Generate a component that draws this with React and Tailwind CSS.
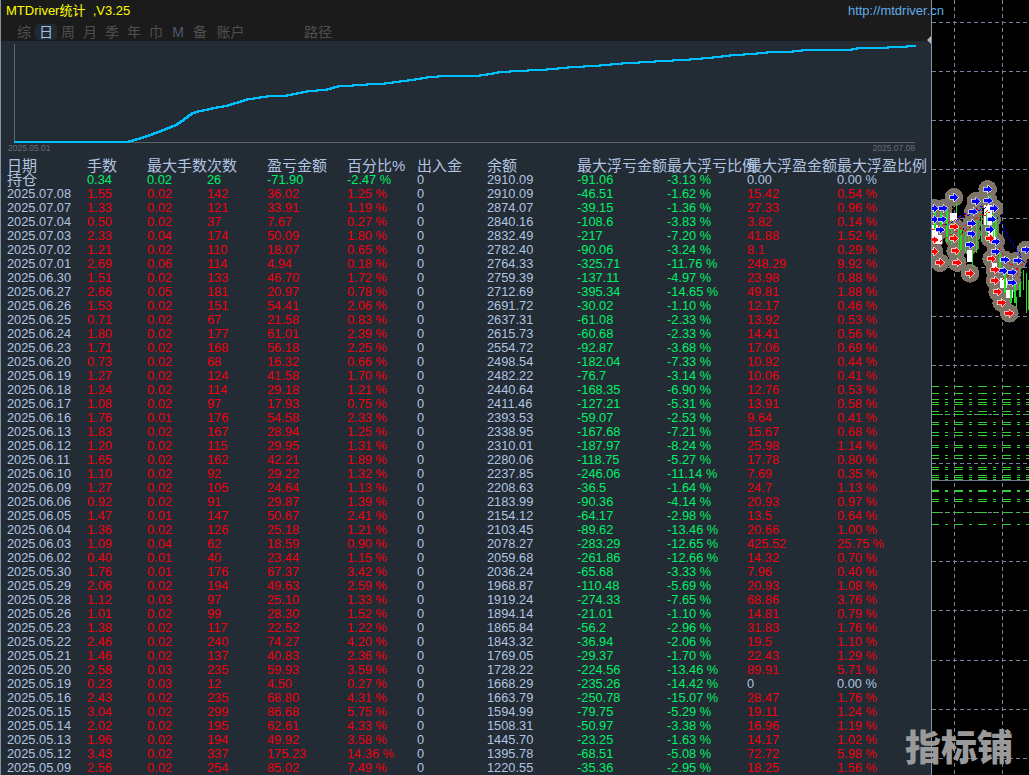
const cols = 'grid grid-cols-[80px_60px_60px_60px_80px_70px_70px_90px_90px_80px_90px_90px]'

const heads = ['日期', '手数', '最大手数', '次数', '盈亏金额', '百分比%', '出入金', '余额', '最大浮亏金额', '最大浮亏比例', '最大浮盈金额', '最大浮盈比例']

const rows = `07.08 1.55 0.02 142 36.02 1.25 2910.09 -46.51 -1.62 15.42 0.54
07.07 1.33 0.02 121 33.91 1.19 2874.07 -39.15 -1.36 27.33 0.96
07.04 0.50 0.02 37 7.67 0.27 2840.16 -108.6 -3.83 3.82 0.14
07.03 2.33 0.04 174 50.09 1.80 2832.49 -217 -7.20 41.88 1.52
07.02 1.21 0.02 110 18.07 0.65 2782.40 -90.06 -3.24 8.1 0.29
07.01 2.69 0.06 114 4.94 0.18 2764.33 -325.71 -11.76 248.29 9.92
06.30 1.51 0.02 133 46.70 1.72 2759.39 -137.11 -4.97 23.98 0.88
06.27 2.66 0.05 181 20.97 0.78 2712.69 -395.34 -14.65 49.81 1.88
06.26 1.53 0.02 151 54.41 2.06 2691.72 -30.02 -1.10 12.17 0.46
06.25 0.71 0.02 67 21.58 0.83 2637.31 -61.08 -2.33 13.92 0.53
06.24 1.80 0.02 177 61.01 2.39 2615.73 -60.68 -2.33 14.41 0.56
06.23 1.71 0.02 168 56.18 2.25 2554.72 -92.87 -3.68 17.06 0.69
06.20 0.73 0.02 68 16.32 0.66 2498.54 -182.04 -7.33 10.92 0.44
06.19 1.27 0.02 124 41.58 1.70 2482.22 -76.7 -3.14 10.06 0.41
06.18 1.24 0.02 114 29.18 1.21 2440.64 -168.35 -6.90 12.76 0.53
06.17 1.08 0.02 97 17.93 0.75 2411.46 -127.21 -5.31 13.91 0.58
06.16 1.76 0.01 176 54.58 2.33 2393.53 -59.07 -2.53 9.64 0.41
06.13 1.83 0.02 167 28.94 1.25 2338.95 -167.68 -7.21 15.67 0.68
06.12 1.20 0.02 115 29.95 1.31 2310.01 -187.97 -8.24 25.98 1.14
06.11 1.65 0.02 162 42.21 1.89 2280.06 -118.75 -5.27 17.78 0.80
06.10 1.10 0.02 92 29.22 1.32 2237.85 -246.06 -11.14 7.69 0.35
06.09 1.27 0.02 105 24.64 1.13 2208.63 -36.5 -1.64 24.7 1.13
06.06 0.92 0.02 91 29.87 1.39 2183.99 -90.36 -4.14 20.93 0.97
06.05 1.47 0.01 147 50.67 2.41 2154.12 -64.17 -2.98 13.5 0.64
06.04 1.36 0.02 126 25.18 1.21 2103.45 -89.62 -13.46 20.66 1.00
06.03 1.09 0.04 62 18.59 0.90 2078.27 -283.29 -12.65 425.52 25.75
06.02 0.40 0.01 40 23.44 1.15 2059.68 -261.86 -12.66 14.32 0.70
05.30 1.76 0.01 176 67.37 3.42 2036.24 -65.68 -3.33 7.96 0.40
05.29 2.06 0.02 194 49.63 2.59 1968.87 -110.48 -5.69 20.93 1.08
05.28 1.12 0.03 97 25.10 1.33 1919.24 -274.33 -7.65 68.86 3.76
05.26 1.01 0.02 99 28.30 1.52 1894.14 -21.01 -1.10 14.81 0.79
05.23 1.38 0.02 117 22.52 1.22 1865.84 -56.2 -2.96 31.83 1.76
05.22 2.46 0.02 240 74.27 4.20 1843.32 -36.94 -2.06 19.5 1.10
05.21 1.46 0.02 137 40.83 2.36 1769.05 -29.37 -1.70 22.43 1.29
05.20 2.58 0.03 235 59.93 3.59 1728.22 -224.56 -13.46 89.91 5.71
05.19 0.23 0.03 12 4.50 0.27 1668.29 -235.26 -14.42 0 0.00
05.16 2.43 0.02 235 68.80 4.31 1663.79 -250.78 -15.07 28.47 1.76
05.15 3.04 0.02 299 86.68 5.75 1594.99 -79.75 -5.29 19.11 1.24
05.14 2.02 0.02 195 62.61 4.33 1508.31 -50.97 -3.38 16.96 1.19
05.13 1.96 0.02 194 49.92 3.58 1445.70 -23.25 -1.63 14.17 1.02
05.12 3.43 0.02 337 175.23 14.36 1395.78 -68.51 -5.08 72.72 5.98
05.09 2.56 0.02 254 85.02 7.49 1220.55 -35.36 -2.95 18.25 1.56`
  .split('\n')
  .map((line) => line.split(' '))

const curve = [
  [14, 142], [125, 142], [133, 140], [143, 137], [160, 131], [177, 124], [184, 119], [192, 113], [198, 111], [217, 107],
  [228, 105], [247, 99], [267, 96], [287, 95], [307, 91], [327, 89], [338, 86], [367, 84], [385, 83], [415, 79],
  [427, 77], [438, 76], [473, 76], [487, 74], [498, 72], [510, 71], [528, 70], [547, 69], [568, 67], [600, 65],
  [622, 63], [655, 61], [690, 59], [713, 57], [730, 55], [757, 53], [767, 52], [793, 51], [802, 50], [847, 50],
  [857, 48], [888, 47], [907, 46], [916, 46],
]

const hGrid = [22, 71, 120, 169, 218, 267, 316, 365, 414, 463, 512, 561, 610, 660, 709, 758]
const greenRows = [386, 393, 399, 402, 404, 411, 414, 422, 424, 432, 435, 445, 447, 455, 458, 467, 469, 475, 477, 479, 490, 491, 499, 501, 512, 524]

// marker cluster, in coordinates of a 3x crop that starts at 925,170
const blue = [[87, 82], [188, 58], [153, 94], [27, 115], [55, 115], [190, 92], [207, 115], [27, 148], [52, 148], [200, 148], [145, 125], [140, 160], [45, 180], [140, 192], [195, 178], [212, 215], [135, 225], [212, 245], [240, 270], [278, 272], [303, 240], [262, 307], [235, 303], [262, 338]]
const red = [[27, 210], [87, 205], [88, 170], [27, 245], [92, 243], [45, 278], [97, 278], [135, 310], [200, 267], [210, 300], [210, 332], [218, 366], [230, 398], [253, 430], [195, 205]]
const white = [[18, 165, 22, 50], [28, 195, 22, 28], [125, 240, 20, 35], [178, 105, 22, 60], [190, 180, 22, 30], [75, 128, 22, 25], [225, 325, 22, 30], [243, 360, 22, 24], [200, 280, 16, 22]]
const greenBars = [[30, 120, 180], [48, 125, 190], [66, 120, 215], [80, 150, 225], [95, 100, 130], [100, 175, 260], [108, 180, 240], [122, 185, 250], [130, 180, 230], [143, 170, 290], [155, 150, 250], [170, 130, 215], [185, 130, 215], [197, 75, 100], [205, 130, 210], [213, 140, 200], [225, 250, 300], [240, 300, 370], [258, 360, 400], [270, 340, 400], [275, 380, 415], [285, 340, 380], [295, 300, 360], [305, 310, 430], [311, 330, 420]]
const dashes = [
  ['#ff0000', 20, 180, 185, 105], ['#ff0000', 30, 225, 200, 115], ['#0000ff', 60, 165, 190, 110], ['#ff0000', 90, 205, 195, 125],
  ['#0000ff', 100, 140, 180, 105], ['#ff0000', 190, 190, 290, 330], ['#0000ff', 215, 140, 290, 260], ['#ff0000', 200, 240, 280, 300],
  ['#0000ff', 235, 180, 305, 290], ['#ff0000', 230, 330, 312, 270],
]

function Arrow({ x, y, color }) {
  return (
    <polygon
      points={`${x - 13},${y - 6} ${x},${y - 6} ${x},${y - 13} ${x + 14},${y} ${x},${y + 13} ${x},${y + 6} ${x - 13},${y + 6}`}
      fill={color}
      stroke="#ffffff"
      strokeWidth="2"
    />
  )
}

function Cell({ tone, children }) {
  const color = tone === 'up' ? 'text-[#f00010]' : tone === 'down' ? 'text-[#00f068]' : 'text-[#b0c4e0]'
  return <div className={`whitespace-nowrap ${color}`}>{children}</div>
}

function Row({ r }) {
  const [date, lots, max, count, profit, pct, balance, loss, lossPct, gain, gainPct] = r
  const zero = gain === '0'
  return (
    <div className={`${cols} h-[14px] leading-[14px]`}>
      <Cell>2025.{date}</Cell>
      <Cell tone="up">{lots}</Cell>
      <Cell tone="up">{max}</Cell>
      <Cell tone="up">{count}</Cell>
      <Cell tone="up">{profit}</Cell>
      <Cell tone="up">{pct} %</Cell>
      <Cell>0</Cell>
      <Cell>{balance}</Cell>
      <Cell tone="down">{loss}</Cell>
      <Cell tone="down">{lossPct} %</Cell>
      <Cell tone={zero ? undefined : 'up'}>{gain}</Cell>
      <Cell tone={zero ? undefined : 'up'}>{gainPct} %</Cell>
    </div>
  )
}

function Chart() {
  // the balance moves in 1px steps, so split each stretch into small stairs
  let d = `M${curve[0][0]} ${curve[0][1]}`
  curve.slice(1).forEach(([x, y], i) => {
    const [px, py] = curve[i]
    const steps = Math.max(1, Math.abs(y - py))
    for (let s = 1; s <= steps; s++) {
      d += `H${Math.round(px + ((x - px) * s) / steps)}V${py + ((y - py) * s) / steps}`
    }
  })
  return (
    <svg viewBox="1 41 930 102" className="block h-[102px] w-[930px]" shapeRendering="crispEdges">
      <path d="M14 44V142H915" fill="none" stroke="#5f6468" strokeWidth="1" />
      <path d={d} fill="none" stroke="#00bfff" strokeWidth="2" />
    </svg>
  )
}

function MarketCanvas() {
  return (
    <svg viewBox="932 0 97 775" className="block h-[775px] w-[97px]">
      <g stroke="#77839a" strokeWidth="1" strokeDasharray="4 3" shapeRendering="crispEdges">
        {hGrid.map((y) => (
          <line key={y} x1="932" x2="1029" y1={y + 0.5} y2={y + 0.5} />
        ))}
        <line x1="954.5" x2="954.5" y1="0" y2="775" />
        <line x1="1002.5" x2="1002.5" y1="0" y2="775" />
      </g>
      <g stroke="#33cc33" strokeWidth="1" strokeDasharray="9 6 3 6" shapeRendering="crispEdges">
        {greenRows.map((y) => (
          <line key={y} x1="930" x2="1029" y1={y + 0.5} y2={y + 0.5} />
        ))}
      </g>
      <line x1="932" x2="1029" y1="480.5" y2="480.5" stroke="#6f7a88" shapeRendering="crispEdges" />
      <g transform="translate(925 170) scale(0.3333)" shapeRendering="crispEdges">
        {[...blue, ...red].map(([x, y]) => (
          <circle key={`${x}-${y}`} cx={x} cy={y} r="28" fill="#7f7468" />
        ))}
        {white.map(([x, y, w, h]) => (
          <rect key={`${x}-${y}`} x={x} y={y} width={w} height={h} fill="#ffffff" />
        ))}
        {greenBars.map(([x, y1, y2]) => (
          <line key={`${x}-${y1}`} x1={x} x2={x} y1={y1} y2={y2} stroke="#22dd22" strokeWidth="4" />
        ))}
        {dashes.map(([color, x1, y1, x2, y2]) => (
          <line key={`${x1}-${y1}`} x1={x1} y1={y1} x2={x2} y2={y2} stroke={color} strokeWidth="3" strokeDasharray="8 10" />
        ))}
        {blue.map(([x, y]) => (
          <Arrow key={`${x}-${y}`} x={x} y={y} color="#0000ff" />
        ))}
        {red.map(([x, y]) => (
          <Arrow key={`${x}-${y}`} x={x} y={y} color="#ff0000" />
        ))}
      </g>
    </svg>
  )
}

export default function App() {
  const tabs = ['综', '日', '周', '月', '季', '年', '巾', 'M', '备']
  return (
    <div className="relative flex h-[775px] w-[1029px] overflow-hidden bg-black font-['Liberation_Sans','Noto_Sans_CJK_SC',sans-serif] text-[13px]">
      <div className="relative z-10 h-[775px] w-[932px] shrink-0 border-x border-x-[#8392a6] bg-[#232b34]">
        <div className="h-[41px] bg-[#1b1b1b]">
          <div className="flex h-[21px] items-center justify-between pl-[5px]">
            <span className="whitespace-pre text-[#ffff00]">MTDriver统计  ,V3.25</span>
            <span className="-mr-[13px] text-[#5eaee6]">http://mtdriver.cn</span>
          </div>
          <div className="flex h-[20px] items-center pl-[12px] pt-[2px] text-[14px] text-[#4f4f4f]">
            {tabs.map((t) => (
              <span
                key={t}
                className={`flex h-[16px] w-[22px] items-center justify-center rounded-sm ${
                  t === '日' ? 'bg-[#202a35] text-[#a6c0e4]' : t === 'M' ? 'text-[#4d5a70]' : ''
                }`}
              >
                {t}
              </span>
            ))}
            <span className="w-[39px] text-center">账户</span>
            <span className="ml-[46px] w-[44px] text-center">路径</span>
          </div>
        </div>
        <div className="relative">
          <Chart />
          <span className="absolute -top-[5px] right-0 h-0 w-0 border-y-[4px] border-r-[4px] border-y-transparent border-r-[#b5b5b5]" />
        </div>
        <div className="flex h-[15px] items-start justify-between pl-[7px] pr-[16px] text-[8.5px] leading-[10px] text-[#6a6f75]">
          <span>2025.05.01</span>
          <span>2025.07.08</span>
        </div>
        <div className="pl-[6px] text-[12.8px]">
          <div className={`${cols} h-[15px] text-[15px] leading-[15px] text-[#b0c4e0]`}>
            {heads.map((h) => (
              <div key={h} className="whitespace-nowrap">
                {h}
              </div>
            ))}
          </div>
          <div className={`${cols} h-[14px] leading-[14px]`}>
            <div className="text-[15px] text-[#b0c4e0]">持仓</div>
            <Cell tone="down">0.34</Cell>
            <Cell tone="down">0.02</Cell>
            <Cell tone="down">26</Cell>
            <Cell tone="down">-71.90</Cell>
            <Cell tone="down">-2.47 %</Cell>
            <Cell>0</Cell>
            <Cell>2910.09</Cell>
            <Cell tone="down">-91.06</Cell>
            <Cell tone="down">-3.13 %</Cell>
            <Cell>0.00</Cell>
            <Cell>0.00 %</Cell>
          </div>
          {rows.map((r) => (
            <Row key={r[0]} r={r} />
          ))}
        </div>
      </div>
      <MarketCanvas />
      <div className="absolute left-[905px] top-[729px] z-20 text-[36px] font-black leading-[40px] text-[#9a9a9a]">指标铺</div>
    </div>
  )
}
